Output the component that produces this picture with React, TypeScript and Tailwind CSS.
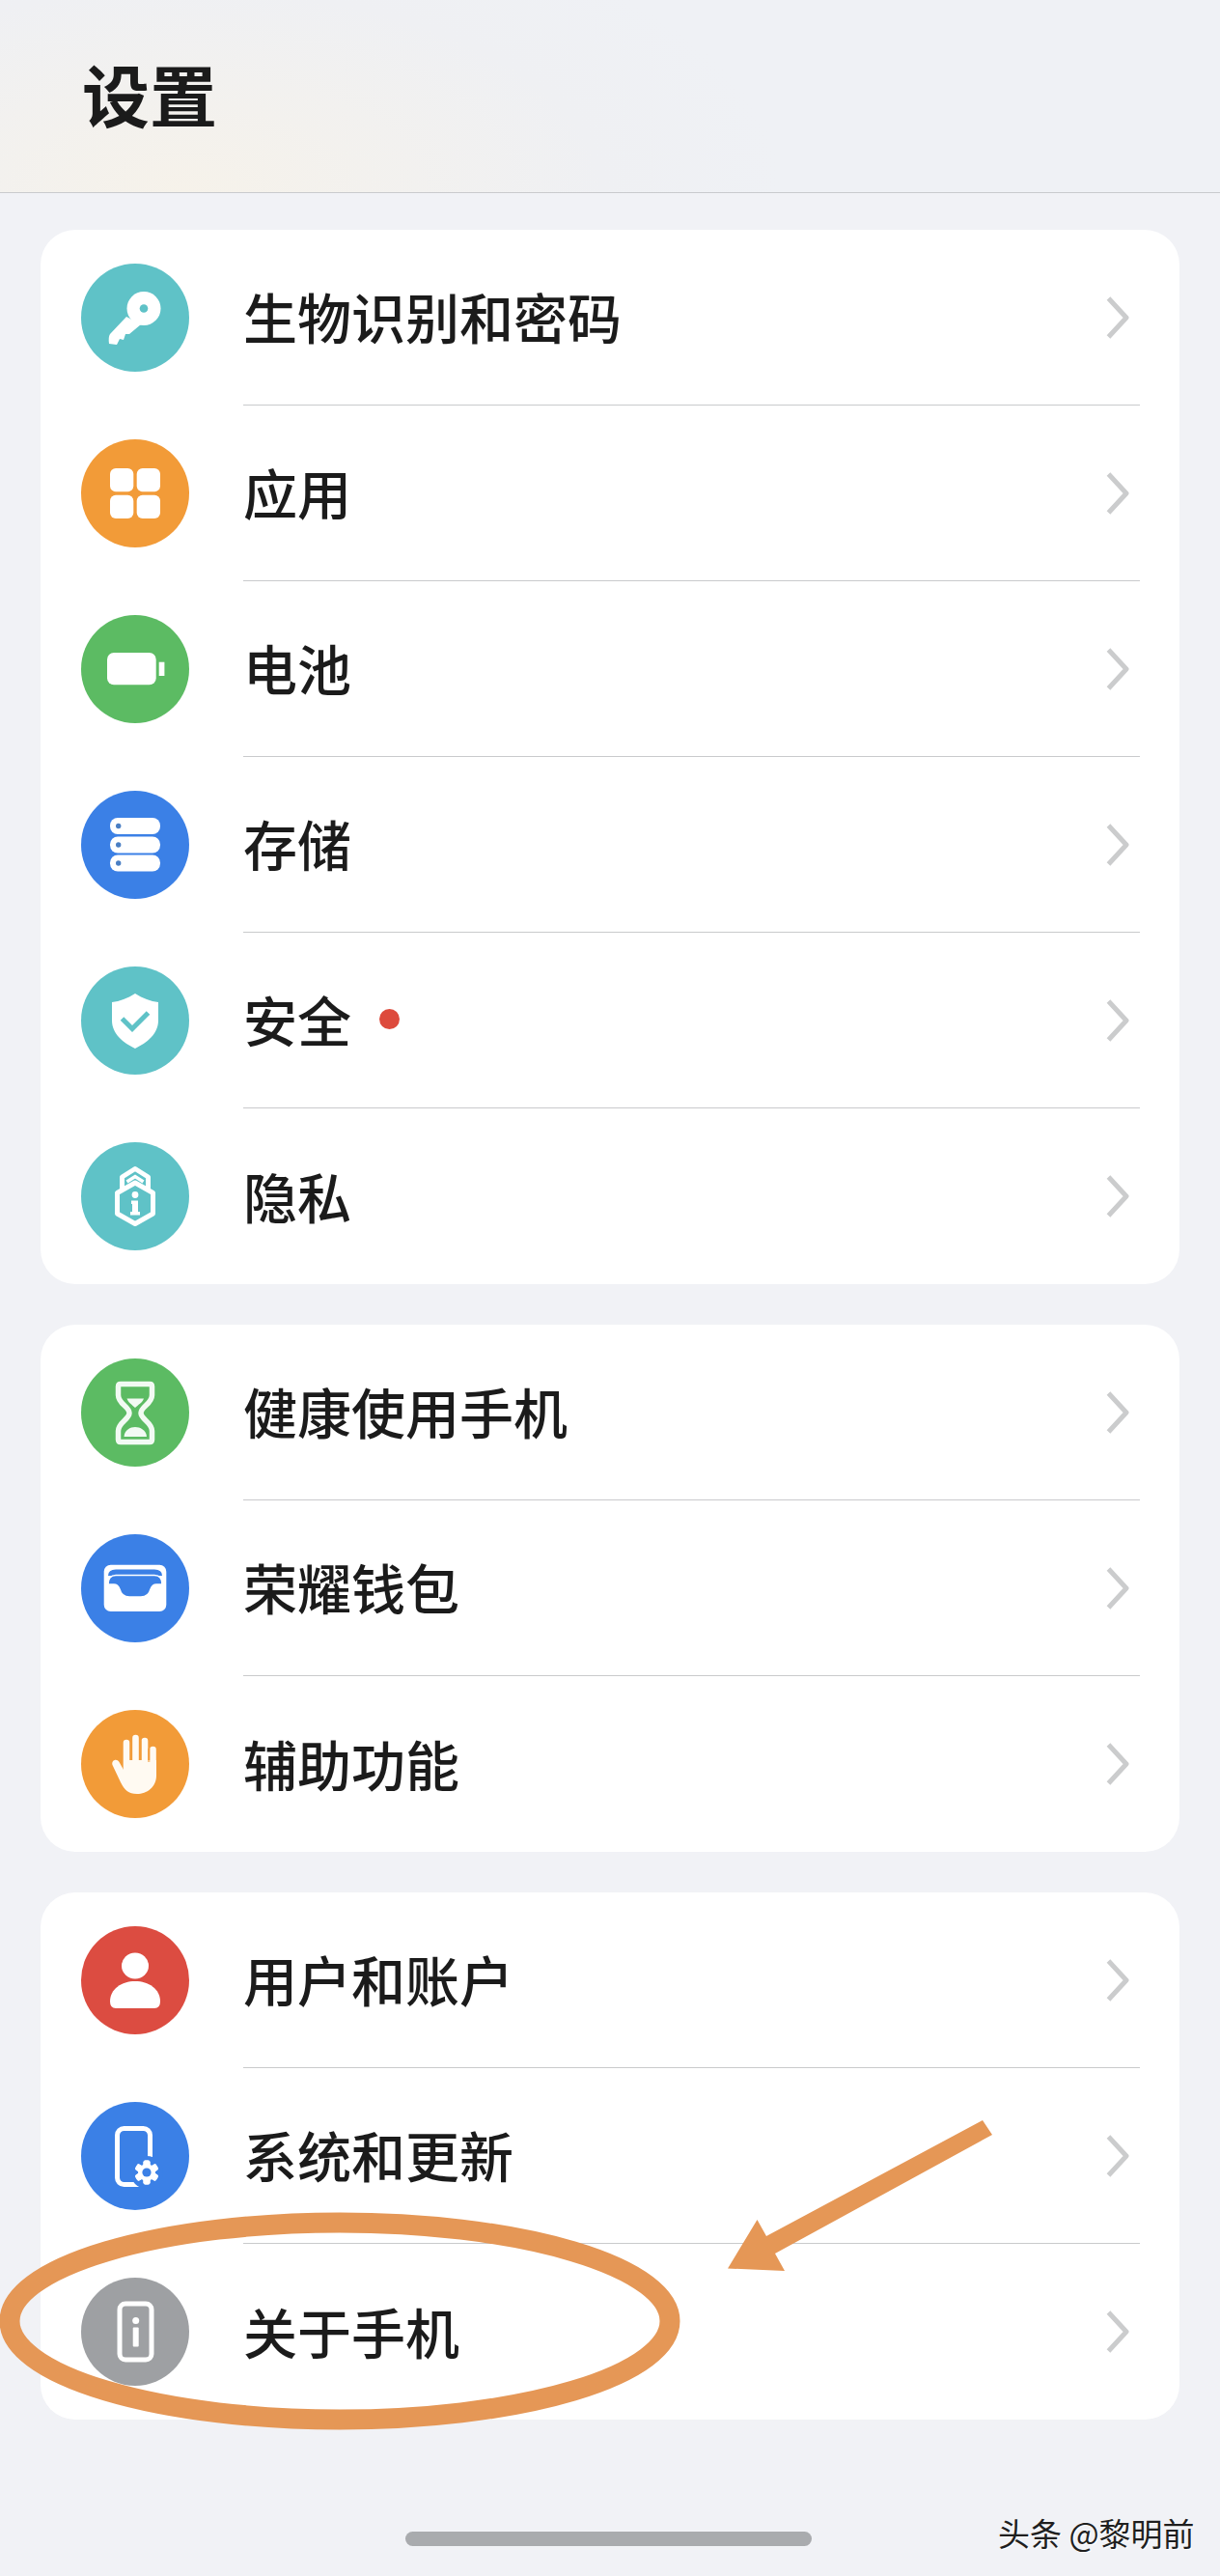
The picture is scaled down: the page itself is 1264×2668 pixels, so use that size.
import type { ReactNode } from 'react';

const TEAL = '#5fc2c7';
const ORANGE = '#f29b38';
const GREEN = '#5cbb63';
const BLUE = '#3b80e6';
const RED = '#dc4c41';
const GRAY = '#9ea0a3';

function KeyIcon() {
  return (
    <>
      <circle cx="65" cy="46.5" r="17.5" fill="white" />
      <circle cx="65" cy="46.5" r="4.3" fill={TEAL} />
      <path d="M47 55 L30 73 Q28 76 29 83 L37 84 L40 78 L44 79 L46 73 L50 73 L62 63 Z" fill="white" />
    </>
  );
}

function AppsIcon() {
  return (
    <>
      <rect x="30" y="30" width="24.3" height="24.3" rx="6" fill="white" />
      <rect x="57.7" y="30" width="24.3" height="24.3" rx="6" fill="white" />
      <rect x="30" y="57.7" width="24.3" height="24.3" rx="6" fill="white" />
      <rect x="57.7" y="57.7" width="24.3" height="24.3" rx="6" fill="white" />
    </>
  );
}

function BatteryIcon() {
  return (
    <>
      <rect x="27" y="39" width="50.7" height="33.3" rx="7" fill="white" />
      <rect x="80.7" y="48.7" width="5.7" height="14.3" fill="white" />
    </>
  );
}

function StorageIcon() {
  return (
    <>
      { [28, 47.5, 66.5].map((y) => (
        <g key={y}>
          <rect x="30" y={y} width="52" height="17" rx="8" fill="white" />
          <circle cx="38.7" cy={y + 8.5} r="2.7" fill="#4a7fc4" />
        </g>
      )) }
    </>
  );
}

function ShieldIcon() {
  return (
    <>
      <path d="M56 28 C48 33 40 36 32 37 V56 C32 70 44 79 56 85 C68 79 80 70 80 56 V37 C72 36 64 33 56 28 Z" fill="white" />
      <path d="M42.5 54 L53 64.5 L69.5 48" fill="none" stroke={TEAL} strokeWidth="5" />
    </>
  );
}

function PrivacyIcon() {
  return (
    <>
      <path d="M42.5 50 V36 L56 27.5 L69.5 36 V50" fill="none" stroke="white" strokeWidth="5" strokeLinejoin="round" />
      <path d="M47.5 41 L56 35.5 L64.5 41" fill="none" stroke="white" strokeWidth="3.5" />
      <path d="M56 42 L74.5 52.5 V74 L56 84.5 L37.5 74 V52.5 Z" fill={TEAL} stroke="white" strokeWidth="5" strokeLinejoin="round" />
      <circle cx="56" cy="54.5" r="3.4" fill="white" />
      <path d="M52 60.5 H59 V72 H61 V75.5 H51 V72 H53 V64 H52 Z" fill="white" />
    </>
  );
}

function HourglassIcon() {
  return (
    <>
      <path
        d="M41 26.5 H71 Q73.5 26.5 73.5 29 V38 C73.5 47 62 50 62 56.5 C62 63 73.5 66 73.5 75 V84 Q73.5 86.5 71 86.5 H41 Q38.5 86.5 38.5 84 V75 C38.5 66 50 63 50 56.5 C50 50 38.5 47 38.5 38 V29 Q38.5 26.5 41 26.5 Z"
        fill="none"
        stroke="#f2faf3"
        strokeWidth="5.5"
      />
      <path d="M47.5 41.5 H65 C63.5 46 59 48 56 51 C53 48 49 46 47.5 41.5 Z" fill="#f2faf3" />
      <path d="M44.5 81 C45 74 51 71 56 71 C61 71 67.5 74 68 81 Z" fill="#f2faf3" />
    </>
  );
}

function WalletIcon() {
  return (
    <>
      <rect x="23.7" y="31.7" width="64.6" height="48.3" rx="7" fill="white" />
      <path d="M28 43 Q28 36.5 36 36.5 H76 Q84 36.5 84 43 Z" fill={BLUE} />
      <path d="M28 52 Q28 42.5 36 42.5 H76 Q84 42.5 84 52 H78 Q74 52 72 57 Q70 65 62 65 H50 Q42 65 40 57 Q38 52 34 52 Z" fill={BLUE} stroke="white" strokeWidth="1.5" />
    </>
  );
}

function HandIcon() {
  return (
    <g>
      <path d="M47 34 V62 M56.5 29 V62 M66 32 V62 M74.5 41 V66" stroke="#fffaf2" strokeWidth="6.6" strokeLinecap="round" fill="none" />
      <path d="M44 52 H78 V68 C78 80 68 87 58 87 C49 87 45 83 41 75 L32.5 57 C31 52 37 49.5 39.5 54 L44 62 Z" fill="#fffaf2" />
      <path d="M51.8 32 V52 M61.2 32 V52 M70.2 40 V54" stroke={ORANGE} strokeWidth="2.4" opacity="0.55" fill="none" />
    </g>
  );
}

function UserIcon() {
  return (
    <>
      <ellipse cx="56" cy="41" rx="14" ry="13.5" fill="white" />
      <path d="M30 78 C30 65 42 57 56 57 C70 57 82 65 82 78 Q82 85 76 85 H36 Q30 85 30 78 Z" fill="white" />
    </>
  );
}

function SystemIcon() {
  return (
    <>
      <rect x="37.5" y="27.5" width="34" height="58" rx="7" fill="none" stroke="white" strokeWidth="5" />
      <circle cx="68" cy="73" r="17" fill={BLUE} />
      { [0, 60, 120, 180, 240, 300].map((a) => (
        <rect key={a} x="64.5" y="60.5" width="7" height="25" rx="2" fill="white" transform={`rotate(${a} 68 73)`} />
      )) }
      <circle cx="68" cy="73" r="9" fill="white" />
      <circle cx="68" cy="73" r="4.6" fill={BLUE} />
    </>
  );
}

function AboutIcon() {
  return (
    <>
      <rect x="40" y="27" width="33" height="58" rx="6" fill="none" stroke="white" strokeWidth="5" />
      <circle cx="56.7" cy="44.6" r="3.5" fill="white" />
      <rect x="53.7" y="51.4" width="6" height="20" rx="1" fill="white" />
    </>
  );
}

function RowIcon({ color, children }: { color: string; children: ReactNode }) {
  return (
    <svg className="w-[112px] h-[112px] shrink-0" viewBox="0 0 112 112">
      <circle cx="56" cy="56" r="56" fill={color} />
      { children }
    </svg>
  );
}

function Chevron() {
  return (
    <svg className="w-[24px] h-[44px] shrink-0" viewBox="0 0 24 44" fill="none">
      <path d="M2.5 2 L21 22 L2.5 42" stroke="#cbcccd" strokeWidth="5" strokeLinejoin="round" />
    </svg>
  );
}

function SettingRow({ item, last }: { item: Item; last: boolean }) {
  return (
    <div className="flex items-stretch h-[182px] pl-[42px] pr-[41px]">
      <div className="flex items-center mr-[56px]">
        <RowIcon color={item.color}>{ item.icon }</RowIcon>
      </div>
      <div className={`flex flex-1 items-center justify-between pr-[11px] ${last ? '' : 'border-b border-[#c9cacc]'}`}>
        <div className="flex items-center">
          <span className="text-[56px] leading-none mt-[-3px] font-medium text-[#1b1b1b]">{ item.label }</span>
          { item.dot && <span className="ml-[29px] mt-[-2px] w-[21px] h-[21px] rounded-full bg-[#dd4a3c]"></span> }
        </div>
        <Chevron />
      </div>
    </div>
  );
}

type Item = { label: string; color: string; icon: ReactNode; dot?: boolean };

const groups: Item[][] = [
  [
    { label: '生物识别和密码', color: TEAL, icon: <KeyIcon /> },
    { label: '应用', color: ORANGE, icon: <AppsIcon /> },
    { label: '电池', color: GREEN, icon: <BatteryIcon /> },
    { label: '存储', color: BLUE, icon: <StorageIcon /> },
    { label: '安全', color: TEAL, icon: <ShieldIcon />, dot: true },
    { label: '隐私', color: TEAL, icon: <PrivacyIcon /> },
  ],
  [
    { label: '健康使用手机', color: GREEN, icon: <HourglassIcon /> },
    { label: '荣耀钱包', color: BLUE, icon: <WalletIcon /> },
    { label: '辅助功能', color: ORANGE, icon: <HandIcon /> },
  ],
  [
    { label: '用户和账户', color: RED, icon: <UserIcon /> },
    { label: '系统和更新', color: BLUE, icon: <SystemIcon /> },
    { label: '关于手机', color: GRAY, icon: <AboutIcon /> },
  ],
];

export default function App() {
  return (
    <div className="relative w-[1264px] h-[2668px] overflow-hidden bg-[#f1f2f6] font-['Noto_Sans_CJK_SC','Noto_Sans',sans-serif]">
      { /* Header */ }
      <header className="h-[200px] border-b border-[#c9cacd] bg-[radial-gradient(ellipse_620px_300px_at_15%_100%,#f6f2ea_0%,#eff0f3_70%,#eff1f5_100%)] flex items-center pl-[85px] pb-[6px]">
        <h1 className="text-[70px] leading-none font-bold text-[#1b1b1b]">设置</h1>
      </header>

      { /* Groups */ }
      <main className="flex flex-col gap-[42px] pt-[38px] px-[42px]">
        { groups.map((group) => (
          <section key={group[0].label} className="bg-white rounded-[36px] overflow-hidden">
            { group.map((item, i) => (
              <SettingRow key={item.label} item={item} last={i === group.length - 1} />
            )) }
          </section>
        )) }
      </main>

      { /* Home indicator */ }
      <div className="mt-[116px] ml-[420px] w-[421px] h-[15px] rounded-full bg-[#a9abae]"></div>

      { /* Watermark */ }
      <span className="absolute left-[1034px] top-[2600px] text-[33px] leading-[46px] whitespace-nowrap text-[#1f1f1f] [text-shadow:1px_1px_0_#ffffff]">头条 @黎明前</span>

      { /* Hand-drawn annotation */ }
      <svg className="absolute left-0 top-0 w-[1264px] h-[2668px] pointer-events-none" viewBox="0 0 1264 2668" fill="none">
        <ellipse cx="352" cy="2404" rx="342" ry="102" stroke="#e59756" strokeWidth="21" />
        <path d="M1018 2196 L1028 2211 L803 2334 L813 2352 L754 2349.5 L784.5 2299 L794 2316 Z" fill="#e59756" />
      </svg>
    </div>
  );
}
